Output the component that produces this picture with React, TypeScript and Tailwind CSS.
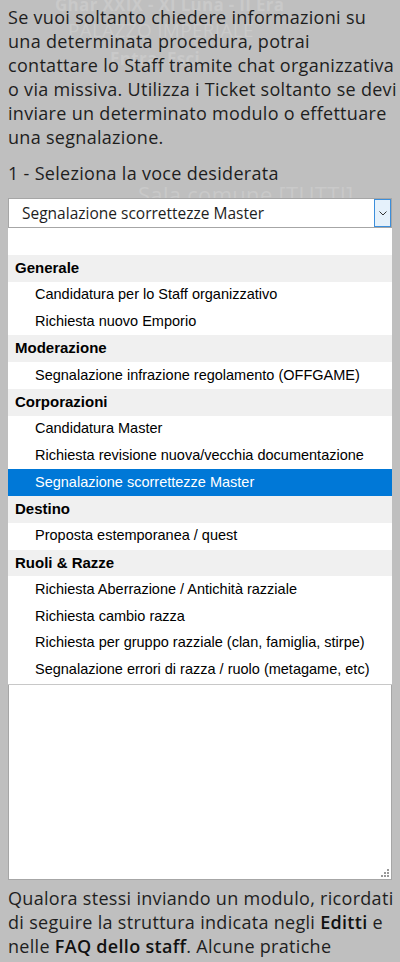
import React from "react";

type Group = { label: string; options: string[] };

const groups: Group[] = [
  { label: "Generale", options: ["Candidatura per lo Staff organizzativo", "Richiesta nuovo Emporio"] },
  { label: "Moderazione", options: ["Segnalazione infrazione regolamento (OFFGAME)"] },
  {
    label: "Corporazioni",
    options: [
      "Candidatura Master",
      "Richiesta revisione nuova/vecchia documentazione",
      "Segnalazione scorrettezze Master",
    ],
  },
  { label: "Destino", options: ["Proposta estemporanea / quest"] },
  {
    label: "Ruoli & Razze",
    options: [
      "Richiesta Aberrazione / Antichità razziale",
      "Richiesta cambio razza",
      "Richiesta per gruppo razziale (clan, famiglia, stirpe)",
      "Segnalazione errori di razza / ruolo (metagame, etc)",
    ],
  },
];

const selected = "Segnalazione scorrettezze Master";

export default function App() {
  return (
    <div className="relative min-h-screen overflow-hidden bg-[#bfbfbf] font-['Open_Sans',sans-serif] tracking-[0.3px] text-[#1e1e1e]">
      {/* faint room banner behind the panel */}
      <div className="pointer-events-none absolute inset-x-0 top-0 select-none text-[#c9c9c9]">
        <p className="absolute left-[55px] top-[-8px] text-[17px] font-bold">Ghar XXIX - XI Luna - II Era</p>
        <p className="absolute left-[68px] top-[16px] text-[19px]">PALAZZO IMPERIALE</p>
        <p className="absolute left-[110px] top-[46px] text-[17px] font-bold">Entra &nbsp;Esci</p>
        <p className="absolute left-[138px] top-[178px] text-[22px]">Sala comune [TUTTI]</p>
      </div>

      <div className="relative px-2 pt-[5px]">
        <p className="whitespace-nowrap text-[18px] leading-6">
          Se vuoi soltanto chiedere informazioni su
          <br />
          una determinata procedura, potrai
          <br />
          contattare lo Staff tramite chat organizzativa
          <br />
          o via missiva. Utilizza i Ticket soltanto se devi
          <br />
          inviare un determinato modulo o effettuare
          <br />
          una segnalazione.
        </p>
        <p className="mt-3 text-[18px] leading-6">1 - Seleziona la voce desiderata</p>

        <div className="relative mt-[13px]">
          <div className="flex h-[30px] items-stretch border border-[#a6a6a6] bg-white">
            <span className="flex-1 pl-[13px] text-[15.5px] leading-[28px] tracking-normal">{selected}</span>
            <span className="flex w-[17px] items-center justify-center border border-[#3b8edb] bg-[#e5f1fb]">
              <svg width="8" height="5" viewBox="0 0 8 5">
                <path d="M0.5 0.5 L4 4 L7.5 0.5" fill="none" stroke="#333" strokeWidth="1" />
              </svg>
            </span>
          </div>

          <div className="relative h-[652px] border border-t-0 border-[#a6a6a6] bg-white">
            <svg className="absolute bottom-[2px] right-[2px]" width="8" height="8" viewBox="0 0 8 8">
              <rect x="6" y="0" width="2" height="2" fill="#999" />
              <rect x="3" y="3" width="2" height="2" fill="#999" />
              <rect x="6" y="3" width="2" height="2" fill="#999" />
              <rect x="0" y="6" width="2" height="2" fill="#999" />
              <rect x="3" y="6" width="2" height="2" fill="#999" />
              <rect x="6" y="6" width="2" height="2" fill="#999" />
            </svg>
          </div>

          <ul className="absolute left-0 right-0 top-[30px] border-b border-[#c8c8c8] bg-white font-['Liberation_Sans',sans-serif] text-[14px] tracking-normal whitespace-nowrap text-black">
            <li className="h-[26.8px]" />
            {groups.map((g) => (
              <React.Fragment key={g.label}>
                <li className="flex h-[26.8px] items-center bg-[#f0f0f0] pl-[7px] text-[15px] font-bold">{g.label}</li>
                {g.options.map((o) => (
                  <li
                    key={o}
                    className={
                      o === selected
                        ? "flex h-[26.8px] items-center bg-[#0078d7] pl-[27px] text-[14.5px] text-white"
                        : "flex h-[26.8px] items-center pl-[27px] text-[14.5px]"
                    }
                  >
                    {o}
                  </li>
                ))}
              </React.Fragment>
            ))}
          </ul>
        </div>

        <p className="mt-[6px] whitespace-nowrap text-[18px] leading-6">
          Qualora stessi inviando un modulo, ricordati
          <br />
          di seguire la struttura indicata negli <span className="font-semibold text-[#111]">Editti</span> e
          <br />
          nelle <span className="font-semibold text-[#111]">FAQ dello staff</span>. Alcune pratiche
        </p>
      </div>
    </div>
  );
}
